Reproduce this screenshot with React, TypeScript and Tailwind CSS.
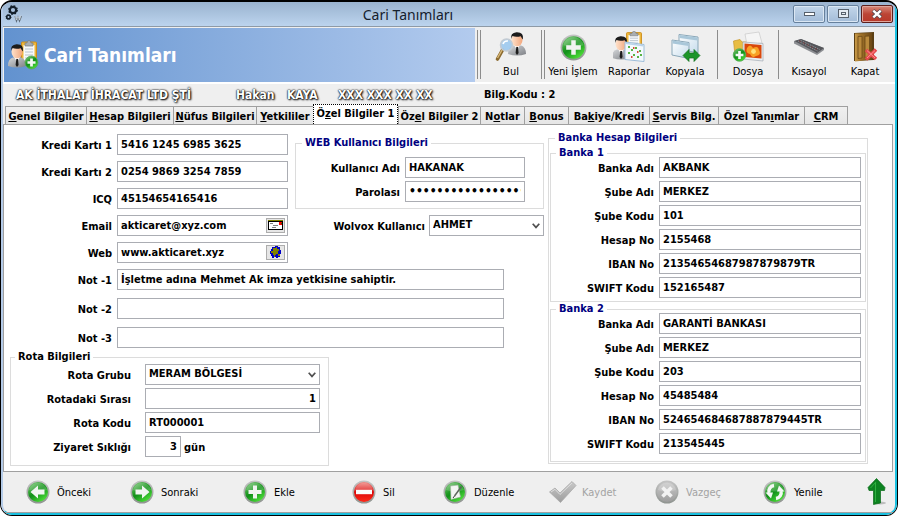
import { useId, type ReactNode } from "react";
import clsx from "clsx";

const inputBase =
  "h-[21px] min-w-0 border border-[#abadb3] bg-white px-[3px] pb-px text-black outline-none";

/* ---------- shared icon parts ---------- */

function IconDefs() {
  return (
    <svg width="0" height="0" className="absolute" aria-hidden="true">
      <defs>
        <linearGradient id="ring" x1="0" y1="0" x2="0" y2="1">
          <stop offset="0" stopColor="#c4c4c4" />
          <stop offset="1" stopColor="#8f9490" />
        </linearGradient>
        <linearGradient id="green" x1="0" y1="0" x2="0.7" y2="1">
          <stop offset="0" stopColor="#8fd08c" />
          <stop offset="0.45" stopColor="#1f9a22" />
          <stop offset="0.55" stopColor="#12901a" />
          <stop offset="1" stopColor="#4fe03a" />
        </linearGradient>
        <linearGradient id="red" x1="0" y1="0" x2="0" y2="1">
          <stop offset="0" stopColor="#f08a84" />
          <stop offset="0.5" stopColor="#dc0808" />
          <stop offset="1" stopColor="#ff2a1a" />
        </linearGradient>
        <linearGradient id="grey" x1="0" y1="0" x2="0" y2="1">
          <stop offset="0" stopColor="#c9c9c9" />
          <stop offset="1" stopColor="#9d9d9d" />
        </linearGradient>
        <linearGradient id="suit" x1="0" y1="0" x2="1" y2="1">
          <stop offset="0" stopColor="#d5d7da" />
          <stop offset="1" stopColor="#7d8085" />
        </linearGradient>
        <linearGradient id="skin" x1="0" y1="0" x2="1" y2="0">
          <stop offset="0" stopColor="#ffe3cd" />
          <stop offset="1" stopColor="#f2a67c" />
        </linearGradient>
        <linearGradient id="wood" x1="0" y1="0" x2="1" y2="0">
          <stop offset="0" stopColor="#c89a48" />
          <stop offset="0.3" stopColor="#a3752b" />
          <stop offset="1" stopColor="#6b4714" />
        </linearGradient>
        <linearGradient id="pane" x1="0" y1="0" x2="1" y2="1">
          <stop offset="0" stopColor="#ffffff" />
          <stop offset="1" stopColor="#c6dcec" />
        </linearGradient>
      </defs>
    </svg>
  );
}

function Person({ transform }: { transform?: string }) {
  return (
    <g transform={transform}>
      <path d="M0 22 Q0 14.500 5 13.500 L13 13.500 Q18 15 18 22 Q9 25 0 22Z" fill="url(#suit)" />
      <path d="M6 13 L9 18 L12 13Z" fill="#fff" />
      <path d="M8.300 15 L10 15 L10.600 21 L9 23 L7.600 21Z" fill="#1d1d1d" />
      <ellipse cx="9" cy="8" rx="5.500" ry="6.500" fill="url(#skin)" />
      <path d="M3.300 7 Q2 1 8.500 0.300 Q16 0 15 7.500 Q13.500 6 12.800 4.200 Q8 5.500 4.500 4 Q3.600 5.500 3.300 7Z" fill="#1c1c1c" />
    </g>
  );
}

function Clipboard({ transform }: { transform?: string }) {
  return (
    <g transform={transform}>
      <rect x="0.500" y="2" width="15" height="21" rx="1" fill="#efb73a" stroke="#c98c1d" />
      <path d="M2.500 5H13.500V21H2.500Z" fill="#f7f9fb" />
      <path d="M4 9H12M4 12H12M4 15H12M4 18H10" stroke="#b9c3cd" />
      <path d="M4 6V3H6Q6 0.500 8 0.500T10 3H12V6Z" fill="#a9aeb3" stroke="#777c80" strokeWidth="0.700" />
    </g>
  );
}

function PlusBadge({ cx, cy, r }: { cx: number; cy: number; r: number }) {
  const a = r * 0.62;
  return (
    <g>
      <circle cx={cx} cy={cy} r={r} fill="url(#green)" stroke="#5aa85a" strokeWidth="0.800" />
      <path d={`M${cx - a} ${cy}H${cx + a}M${cx} ${cy - a}V${cy + a}`} stroke="#f4f8f4" strokeWidth={r * 0.42} />
    </g>
  );
}

function RoundIcon({ fill, size, children }: { fill: string; size: string; children: ReactNode }) {
  return (
    <svg viewBox="0 0 24 24" className={clsx("shrink-0", size)} aria-hidden="true">
      <circle cx="12" cy="12" r="11.500" fill="url(#ring)" />
      <circle cx="12" cy="12" r="10" fill={fill} />
      <path d="M3 10 A9.200 9.200 0 0 1 21 10 Q12 13 3 10Z" fill="#fff" opacity="0.180" />
      {children}
    </svg>
  );
}

/* ---------- toolbar icons ---------- */

const FindIcon = () => (
  <svg viewBox="0 0 32 32" className="h-8 w-8" aria-hidden="true">
    <Person transform="translate(13 1)" />
    <path d="M7.500 19 L2.500 28" stroke="#8b6a2f" strokeWidth="3.600" strokeLinecap="round" />
    <path d="M7 19 L2.500 27" stroke="#d9b978" strokeWidth="1.400" />
    <circle cx="11.500" cy="14" r="6" fill="#9cc9ee" fillOpacity="0.900" stroke="#c3cbd3" strokeWidth="1.600" />
    <path d="M8 13 Q9 9.500 13 10" stroke="#fff" strokeWidth="1.600" fill="none" />
  </svg>
);

const NewIcon = () => (
  <RoundIcon fill="url(#green)" size="size-[27px]">
    <path d="M10 5.500H14V10H18.500V14H14V18.500H10V14H5.500V10H10Z" fill="#f1f3f1" />
  </RoundIcon>
);

const ReportIcon = () => (
  <svg viewBox="0 0 32 32" className="h-8 w-8" aria-hidden="true">
    <Clipboard transform="translate(13 0) scale(1 0.800)" />
    <Person transform="translate(-1 5)" />
    <path d="M12 11 L31 13.500 V30.500 L12 28.500Z" fill="#f4f9fd" stroke="#9dbdd8" />
    <path d="M12.500 11.500 L30.500 14 V15.500 L12.500 13Z" fill="#b9d3ea" />
    <path d="M15 16h2M18 19h2M22 17h2M26 20h2M15 22h2M20 24h2M24 26h2M27 24h2" stroke="#58b344" strokeWidth="1.800" />
    <path d="M20 17h1.500M24 21h1.500M18 26h1.500" stroke="#d94a3a" strokeWidth="1.800" />
  </svg>
);

const CopyIcon = () => (
  <svg viewBox="0 0 32 32" className="h-8 w-8" aria-hidden="true">
    <path d="M10 3.500 L29 6 V22 L10 18Z" fill="url(#pane)" stroke="#8aa7b8" />
    <path d="M10.500 4 L28.500 6.500 V9.500 L10.500 7Z" fill="#a9c7d9" />
    <path d="M3 9 L20 11.500 V27.500 L3 24Z" fill="url(#pane)" stroke="#8aa7b8" />
    <path d="M3.500 9.500 L19.500 12 V15 L3.500 12.500Z" fill="#a9c7d9" />
    <path d="M14 24.500 L20 18.500 V22 H25 V18.500 L31 24.500 L25 30.500 V27 H20 V30.500Z" fill="#1c9429" stroke="#0e6f1b" strokeWidth="0.700" />
  </svg>
);

const FileIcon = () => (
  <svg viewBox="0 0 32 32" className="h-8 w-8" aria-hidden="true">
    <path d="M1.500 10 L8 8.500 L10 11 H18 V24 H3Z" fill="#e8bd43" stroke="#c7962a" strokeWidth="0.700" />
    <path d="M13 3 L27 1 L30 12 L15 14Z" fill="#f5f5f5" stroke="#c8c8c8" strokeWidth="0.700" />
    <path d="M11 11 L31 12.500 V30 L11 28Z" fill="#e9eef3" stroke="#a3abb3" strokeWidth="0.700" />
    <path d="M12.500 12.500 L29.500 14 V27.500 L12.500 26Z" fill="#d9480c" />
    <path d="M15 17 Q18 12 21 17 Q26 14 27 19 Q30 24 24 25 Q20 28 18 23 Q13 22 15 17Z" fill="#f8a024" />
    <circle cx="21.500" cy="20.500" r="2.400" fill="#ffe17a" />
    <PlusBadge cx={7.500} cy={24} r={6.300} />
  </svg>
);

const KeyboardIcon = () => (
  <svg viewBox="0 0 32 32" className="h-8 w-8" aria-hidden="true">
    <path d="M1 10 L8 8 L31 17 L31 19 L24 24 L1 12.500Z" fill="#8c8e92" />
    <path d="M1.500 10 L8 8 L31 17 L24 22Z" fill="#54555a" />
    <path d="M5 10 L24.500 20 M7.500 9.300 L27 18.600" stroke="#a5a6aa" strokeWidth="0.700" strokeDasharray="1.600 1" />
    <path d="M6 9.700 L26 19.300" stroke="#7d3434" strokeWidth="0.800" strokeDasharray="2 2.500" />
  </svg>
);

const DoorIcon = () => (
  <svg viewBox="0 0 32 32" className="h-8 w-8" aria-hidden="true">
    <path d="M5 2 L25 1 V29 L5 30Z" fill="#5b3f14" />
    <path d="M6 2.500 L23 2 V28.500 L6 30.500Z" fill="url(#wood)" />
    <path d="M9 5.500 L13 5.300 V27 L9 27.500ZM16 5.200 L20.500 5 V26.500 L16 26.800Z" fill="#b98a3c" stroke="#6a4815" strokeWidth="0.800" />
    <path d="M17 19 L27 28 M27 18.500 L17 28.500" stroke="#e5484d" strokeWidth="3.600" />
    <path d="M18 19.500 L26 27 M26 19.500 L18 27" stroke="#ff8d8d" strokeWidth="1" />
  </svg>
);

const CustomerIcon = () => (
  <svg viewBox="0 0 32 32" className="h-8 w-8" aria-hidden="true">
    <Clipboard transform="translate(13 1)" />
    <Person transform="translate(0 5)" />
    <PlusBadge cx={23.500} cy={23.500} r={6.500} />
  </svg>
);

const GearsIcon = () => (
  <svg viewBox="0 0 18 18" className="size-[18px]" aria-hidden="true">
    <circle cx="8" cy="5" r="3.200" fill="none" stroke="#14202b" strokeWidth="2.200" />
    <circle cx="8" cy="5" r="4.300" fill="none" stroke="#14202b" strokeWidth="1.200" strokeDasharray="1.700 1.700" />
    <circle cx="3.500" cy="12" r="1.800" fill="none" stroke="#14202b" strokeWidth="1.600" />
    <circle cx="3.500" cy="12" r="2.600" fill="none" stroke="#14202b" strokeWidth="0.900" strokeDasharray="1 1" />
    <path d="M10 11 L11.500 16 L13 12 L14.500 16 L16.500 11" fill="none" stroke="#5d6b78" strokeWidth="1.200" />
    <path d="M10 10.500 L11.500 15 L13 11.500 L14.500 15 L16 10.500" fill="none" stroke="#e9eef2" strokeWidth="0.600" />
  </svg>
);

const MailIcon = () => (
  <svg viewBox="0 0 17 13" className="h-[13px] w-[17px]" shapeRendering="crispEdges" aria-hidden="true">
    <rect x="1" y="2" width="15" height="9" fill="#fff" />
    <path d="M1 1H16V2H1Z" fill="#808000" />
    <path d="M1.500 2.500H15.500V10.500H1.500Z" fill="none" stroke="#000" />
    <path d="M3 4.500H6M6 6.500H11M5 8.500H9" stroke="#808080" />
    <rect x="12" y="3" width="3" height="3" fill="#f00" />
    <rect x="14" y="4" width="1" height="1" fill="#008000" />
  </svg>
);

const GlobeIcon = () => (
  <svg viewBox="0 0 17 13" className="h-[13px] w-[17px]" shapeRendering="crispEdges" aria-hidden="true">
    <path d="M5 1H8V0H11V1H13V4H14V8H13V11H11V12H9V11H7V12H5V10H4V8H3V5H4V3H5Z" fill="#0000c8" />
    <path d="M6 2H9V1H10V3H12V5H11V8H9V9H8V11H7V9H6V7H4V5H6Z" fill="#808000" />
    <path d="M11 8H13V10H11Z" fill="#808000" />
  </svg>
);

/* ---------- form parts ---------- */

interface FieldProps {
  label: string;
  value: string;
  labelClass: string;
  inputClass?: string;
  type?: string;
  suffix?: string;
  action?: { title: string; icon: ReactNode };
}

const labelBase = "shrink-0 pt-[3px] text-right whitespace-nowrap";

function Field({ label, value, labelClass, inputClass = "flex-1", type = "text", suffix, action }: FieldProps) {
  const id = useId();
  return (
    <div className="flex h-[21px] items-center">
      <label htmlFor={id} className={clsx(labelBase, labelClass)}>
        {label}
      </label>
      <div className={clsx("relative flex", inputClass)}>
        <input
          id={id}
          type={type}
          defaultValue={value}
          className={clsx(inputBase, "w-full", inputClass.includes("text-right") && "text-right", type === "password" && "text-[12px]")}
        />
        {action && (
          <button
            type="button"
            title={action.title}
            className="absolute top-[3px] right-[3px] flex h-[15px] w-[19px] items-center justify-center border border-[#adadad] bg-[#e6e6e6]"
          >
            {action.icon}
          </button>
        )}
      </div>
      {suffix && <span className="ml-[3px] pt-[3px]">{suffix}</span>}
    </div>
  );
}

function SelectField({ label, value, labelClass, selectClass }: { label: string; value: string; labelClass: string; selectClass: string }) {
  const id = useId();
  return (
    <div className="flex h-[21px] items-center">
      <label htmlFor={id} className={clsx(labelBase, labelClass)}>
        {label}
      </label>
      <div className={clsx("relative flex", selectClass)}>
        <select id={id} defaultValue={value} className={clsx(inputBase, "w-full appearance-none")}>
          <option>{value}</option>
        </select>
        <svg viewBox="0 0 8 6" className="pointer-events-none absolute top-2 right-1 h-[6px] w-2" aria-hidden="true">
          <path d="M0.700 0.800 L4 4.400 L7.300 0.800" fill="none" stroke="#505050" strokeWidth="1.700" />
        </svg>
      </div>
    </div>
  );
}

function Group({ title, className, legendClass, children }: { title: string; className?: string; legendClass?: string; children: ReactNode }) {
  return (
    <fieldset className={clsx("min-w-0 border border-[#dcdcdc]", className)}>
      <legend className={clsx("px-[3px] leading-2 whitespace-nowrap", legendClass)}>{title}</legend>
      {children}
    </fieldset>
  );
}

const banks = [
  {
    title: "Banka 1",
    rows: [
      ["Banka Adı", "AKBANK"],
      ["Şube Adı", "MERKEZ"],
      ["Şube Kodu", "101"],
      ["Hesap No", "2155468"],
      ["IBAN No", "21354654687987879879TR"],
      ["SWIFT Kodu", "152165487"],
    ],
  },
  {
    title: "Banka 2",
    rows: [
      ["Banka Adı", "GARANTİ BANKASI"],
      ["Şube Adı", "MERKEZ"],
      ["Şube Kodu", "203"],
      ["Hesap No", "45485484"],
      ["IBAN No", "524654684687887879445TR"],
      ["SWIFT Kodu", "213545445"],
    ],
  },
];

// [before, underlined key, after, width]
const tabs = [
  ["", "G", "enel Bilgiler", "w-[81px]"],
  ["", "H", "esap Bilgileri", "w-[87px]"],
  ["", "N", "üfus Bilgileri", "w-[83px]"],
  ["", "Y", "etkililer", "w-[57px]"],
  ["Ö", "z", "el Bilgiler 1", "w-[85px]"],
  ["Öz", "e", "l Bilgiler 2", "w-[82px]"],
  ["N", "o", "tlar", "w-[44px]"],
  ["", "B", "onus", "w-[44px]"],
  ["Ba", "k", "iye/Kredi", "w-[81px]"],
  ["", "S", "ervis Bilg.", "w-[69px]"],
  ["Özel Tan", "ı", "mlar", "w-[86px]"],
  ["", "C", "RM", "w-[44px]"],
];
const activeTab = 4;

function ToolButton({ label, icon, className = "w-14" }: { label: string; icon: ReactNode; className?: string }) {
  return (
    <button type="button" className={clsx("flex shrink-0 flex-col items-center", className)}>
      <span className="flex h-[34px] items-center">{icon}</span>
      <span className="leading-4 whitespace-nowrap">{label}</span>
    </button>
  );
}

const DoubleLine = () => <span className="h-[49px] w-1 shrink-0 border-x border-[#8c8c8c]" />;
const Line = () => <span className="h-[49px] w-px shrink-0 bg-[#8c8c8c]" />;

const footerButtons = [
  {
    label: "Önceki",
    width: "w-[104px]",
    icon: (
      <RoundIcon fill="url(#green)" size="size-6">
        <path d="M4.500 12 L12 5.500 V9.500 H18.500 V14.500 H12 V18.500Z" fill="#f1f5f1" />
      </RoundIcon>
    ),
  },
  {
    label: "Sonraki",
    width: "w-[113px]",
    icon: (
      <RoundIcon fill="url(#green)" size="size-6">
        <path d="M19.500 12 L12 5.500 V9.500 H5.500 V14.500 H12 V18.500Z" fill="#f1f5f1" />
      </RoundIcon>
    ),
  },
  {
    label: "Ekle",
    width: "w-[109px]",
    icon: (
      <RoundIcon fill="url(#green)" size="size-6">
        <path d="M10 5.500H14V10H18.500V14H14V18.500H10V14H5.500V10H10Z" fill="#f1f3f1" />
      </RoundIcon>
    ),
  },
  {
    label: "Sil",
    width: "w-[91px]",
    icon: (
      <RoundIcon fill="url(#red)" size="size-6">
        <path d="M4 9.800H20V14.200H4Z" fill="#fbfbfb" />
      </RoundIcon>
    ),
  },
  {
    label: "Düzenle",
    width: "w-[106px]",
    icon: (
      <RoundIcon fill="url(#green)" size="size-6">
        <path d="M7.500 6 L15 5 L17.500 17 L8 19.500Z" fill="#f3f6f3" stroke="#9fb09f" strokeWidth="0.600" />
        <path d="M18.500 6.500 L11.500 16" stroke="#5c665c" strokeWidth="1.500" />
        <path d="M11.500 16 L10 18" stroke="#222" strokeWidth="0.900" />
      </RoundIcon>
    ),
  },
  {
    label: "Kaydet",
    width: "w-[106px]",
    disabled: true,
    icon: (
      <svg viewBox="0 0 28 24" className="-mr-[2px] h-6 w-7 shrink-0" aria-hidden="true">
        <path d="M0.500 12 L6 8 L11 13 L23 1.500 L27 5.500 L11.500 22.500Z" fill="url(#grey)" stroke="#a9a9a9" strokeWidth="0.800" />
        <path d="M2 12 L6 9.300 L11 14.500 L23 3" fill="none" stroke="#dedede" strokeWidth="1" />
      </svg>
    ),
  },
  {
    label: "Vazgeç",
    width: "w-[108px]",
    disabled: true,
    icon: (
      <RoundIcon fill="url(#grey)" size="size-6">
        <path d="M7.500 7.500 L16.500 16.500 M16.500 7.500 L7.500 16.500" stroke="#f2f2f2" strokeWidth="3.600" />
      </RoundIcon>
    ),
  },
  {
    label: "Yenile",
    width: "w-[102px]",
    icon: (
      <RoundIcon fill="url(#green)" size="size-6">
        <path d="M6 13 A6 6 0 0 1 11 5.500" fill="none" stroke="#f4f8f4" strokeWidth="3.400" />
        <path d="M2.500 12.500 H10 L8 18.500Z" fill="#f4f8f4" />
        <path d="M18 11 A6 6 0 0 1 13 18.500" fill="none" stroke="#f4f8f4" strokeWidth="3.400" />
        <path d="M14 11.500 H21.500 L16 5.500Z" fill="#f4f8f4" />
      </RoundIcon>
    ),
  },
];

const glow = "text-[12px] text-white [text-shadow:1px_1px_2px_#000,0_0_2px_#000,0_0_1px_#000]";
const captionButton =
  "flex h-[18px] w-8 items-center justify-center rounded-[2px] border border-[#66809c] bg-linear-to-b from-[#c3d6ea] to-[#a3bcd8] shadow-[inset_0_0_0_1px_#dbe7f3]";

export default function App() {
  return (
    <div className="flex min-h-screen flex-col overflow-hidden rounded-[12px] border border-t-2 border-black bg-[#efefef] font-['DejaVu_Sans_Condensed','DejaVu_Sans',sans-serif] text-[11px] text-black">
      <IconDefs />
      <div className="flex flex-1 flex-col rounded-b-[10px] border-r-2 border-b-2 border-l-2 border-[#19c0e0] border-l-[#b4cbe8]">
        {/* title bar */}
        <header className="flex h-[25px] shrink-0 items-center border-b border-[#8e9aa6] bg-linear-to-b from-[#9ab3cf] to-[#bcd4ee] pl-[2px]">
          <GearsIcon />
          <h1 className="flex-1 text-center font-['Noto_Sans',sans-serif] text-[14px] text-[#15202c]">Cari Tanımları</h1>
          <div className="flex gap-0.5 pr-0.5 pb-px">
            <button type="button" aria-label="Küçült" className={captionButton}>
              <span className="h-1 w-[11px] border border-[#56606c] bg-white" />
            </button>
            <button type="button" aria-label="Büyüt" className={captionButton}>
              <span className="flex h-[9px] w-[11px] items-center justify-center border border-[#56606c] bg-[#e4ebf3]">
                <span className="h-[3px] w-[5px] border border-[#56606c]" />
              </span>
            </button>
            <button
              type="button"
              aria-label="Pencereyi kapat"
              className="flex h-[18px] w-8 items-center justify-center rounded-[2px] border border-[#5d1f1c] bg-linear-to-b from-[#d98a7c] via-[#bc4435] to-[#b8382a] shadow-[inset_0_0_0_1px_#e0a59b]"
            >
              <svg viewBox="0 0 12 10" className="h-[10px] w-3" aria-hidden="true">
                <path d="M2 1.500 L10 8.500 M10 1.500 L2 8.500" stroke="#5a4a50" strokeWidth="4" />
                <path d="M2.300 1.700 L9.700 8.300 M9.700 1.700 L2.300 8.300" stroke="#fff" strokeWidth="2.400" />
              </svg>
            </button>
          </div>
        </header>

        {/* banner + toolbar */}
        <div className="flex h-[57px] shrink-0 border-b-2 border-white pt-px pl-px">
          <div className="flex min-w-0 flex-1 items-center gap-1 bg-linear-to-r from-[#6292cf] to-[#b3cbee] pl-1">
            <CustomerIcon />
            <h2 className="text-[19px] font-bold whitespace-nowrap text-white">Cari Tanımları</h2>
          </div>
          <nav aria-label="Araç çubuğu" className="flex items-start pt-0.5 pr-1 pl-0.5">
            <DoubleLine />
            <ToolButton label="Bul" icon={<FindIcon />} className="w-15" />
            <DoubleLine />
            <ToolButton label="Yeni İşlem" icon={<NewIcon />} />
            <ToolButton label="Raporlar" icon={<ReportIcon />} />
            <ToolButton label="Kopyala" icon={<CopyIcon />} />
            <div className="flex gap-x-0 pl-1">
              <Line />
              <ToolButton label="Dosya" icon={<FileIcon />} className="w-15" />
              <Line />
            </div>
            <ToolButton label="Kısayol" icon={<KeyboardIcon />} className="w-15" />
            <ToolButton label="Kapat" icon={<DoorIcon />} className="w-13" />
          </nav>
        </div>

        {/* current record */}
        <div className="flex h-[20px] shrink-0 items-center pt-0.5 pl-[13px] font-bold whitespace-nowrap">
          <span className={clsx("w-[220px]", glow)}>AK İTHALAT İHRACAT LTD ŞTİ</span>
          <span className={clsx("w-[51px]", glow)}>Hakan</span>
          <span className={clsx("w-[51px]", glow)}>KAYA</span>
          <span className={clsx("w-[146px]", glow)}>XXX XXX XX XX</span>
          <span>Bilg.Kodu : 2</span>
        </div>

        {/* tabs */}
        <div role="tablist" className="flex h-5 shrink-0 items-end pl-0.5 font-bold">
          {tabs.map(([before, key, after, width], i) => (
            <button
              key={before + key + after}
              type="button"
              role="tab"
              aria-selected={i === activeTab}
              className={clsx(
                "shrink-0 whitespace-nowrap",
                width,
                i === activeTab
                  ? "h-5 border border-b-0 border-dotted border-black bg-white"
                  : "h-[18px] border-t border-l border-[#a0a0a0] bg-linear-to-b from-[#f0f0f0] to-[#e6e6e6] pt-0.5 last:border-r",
              )}
            >
              {before}
              <u>{key}</u>
              {after}
            </button>
          ))}
        </div>

        <main className="mr-[2px] flex flex-1 border border-[#a0a0a0] bg-white pt-[9px] pb-[5px] pl-px font-bold">
          <div className="min-w-0 flex-1">
            <div className="flex">
              <div className="flex shrink-0 flex-col gap-[6px]">
                <Field label="Kredi Kartı 1" value="5416 1245 6985 3625" labelClass="w-28 pr-[5px]" inputClass="w-[171px]" />
                <Field label="Kredi Kartı 2" value="0254 9869 3254 7859" labelClass="w-28 pr-[5px]" inputClass="w-[171px]" />
                <Field label="ICQ" value="45154654165416" labelClass="w-28 pr-[5px]" inputClass="w-[171px]" />
                <Field
                  label="Email"
                  value="akticaret@xyz.com"
                  labelClass="w-28 pr-[5px]"
                  inputClass="w-[171px]"
                  action={{ title: "E-posta gönder", icon: <MailIcon /> }}
                />
                <Field
                  label="Web"
                  value="www.akticaret.xyz"
                  labelClass="w-28 pr-[5px]"
                  inputClass="w-[171px]"
                  action={{ title: "Siteyi aç", icon: <GlobeIcon /> }}
                />
              </div>
              <div className="mt-[5px] mr-[4px] ml-[7px] flex flex-1 flex-col gap-[6px]">
                <Group title="WEB Kullanıcı Bilgileri" legendClass="ml-[6px] text-[#000080]" className="pt-[10px] pb-[6px]">
                  <div className="flex flex-col gap-[3px] pr-[18px]">
                    <Field label="Kullanıcı Adı" value="HAKANAK" labelClass="w-[109px] pr-[5px]" />
                    <Field label="Parolası" value="hakan12345678901234" type="password" labelClass="w-[109px] pr-[5px]" />
                  </div>
                </Group>
                <SelectField label="Wolvox Kullanıcı" value="AHMET" labelClass="w-[134px] pr-[4px]" selectClass="flex-1" />
              </div>
            </div>

            <div className="mt-[6px] mr-[44px] flex flex-col gap-2">
              <Field label="Not -1" value="İşletme adına Mehmet Ak imza yetkisine sahiptir." labelClass="w-28 pr-[5px]" />
              <Field label="Not -2" value="" labelClass="w-28 pr-[5px]" />
              <Field label="Not -3" value="" labelClass="w-28 pr-[5px]" />
            </div>

            <Group title="Rota Bilgileri" legendClass="ml-1" className="mt-[5px] ml-[5px] w-[319px] pt-[3px] pb-2">
              <div className="flex flex-col gap-[3px]">
                <SelectField label="Rota Grubu" value="MERAM BÖLGESİ" labelClass="w-[134px] pr-[14px]" selectClass="w-[175px]" />
                <Field label="Rotadaki Sırası" value="1" labelClass="w-[134px] pr-[14px]" inputClass="w-[175px] text-right" />
                <Field label="Rota Kodu" value="RT000001" labelClass="w-[134px] pr-[14px]" inputClass="w-[175px]" />
                <Field label="Ziyaret Sıklığı" value="3" suffix="gün" labelClass="w-[134px] pr-[14px]" inputClass="w-9 text-right" />
              </div>
            </Group>
          </div>

          <Group title="Banka Hesap Bilgileri" legendClass="ml-[5px] text-[#000080]" className="mr-6 w-80 self-start px-px pt-[7px] pb-px">
            <div className="flex flex-col gap-[3px]">
              {banks.map((bank) => (
                <Group key={bank.title} title={bank.title} legendClass="ml-[5px] text-[#000080]" className="pr-1 pb-[3px] last:pb-[7px]">
                  <div className="flex flex-col gap-[3px]">
                    {bank.rows.map(([label, value]) => (
                      <Field key={label} label={label} value={value} labelClass="w-[108px] pr-[5px]" />
                    ))}
                  </div>
                </Group>
              ))}
            </div>
          </Group>
        </main>

        <footer className="flex h-[41px] shrink-0 items-center border-b border-[#a0a0a0] pr-2 pl-[23px]">
          {footerButtons.map(({ label, width, icon, disabled }) => (
            <button
              key={label}
              type="button"
              disabled={disabled}
              className={clsx("flex shrink-0 items-center gap-[7px] disabled:text-[#a3a3a3]", width)}
            >
              {icon}
              <span className="pt-0.5">{label}</span>
            </button>
          ))}
          <button type="button" aria-label="Yukarı" className="ml-auto">
            <svg viewBox="0 0 20 28" className="h-7 w-5" aria-hidden="true">
              <ellipse cx="13" cy="25" rx="6" ry="1.500" fill="#a8a8a8" opacity="0.700" />
              <path d="M9.500 0.500 L18 9.500 L17.500 12.500 H13.500 V25 L6.500 26.500 V12.500 H2 L1 9.500Z" fill="#0d8220" stroke="#0a6a18" strokeWidth="0.700" />
              <path d="M9 4 L3.500 10 M8.500 5 V24" stroke="#2fb040" strokeWidth="1" />
            </svg>
          </button>
        </footer>
      </div>
    </div>
  );
}
